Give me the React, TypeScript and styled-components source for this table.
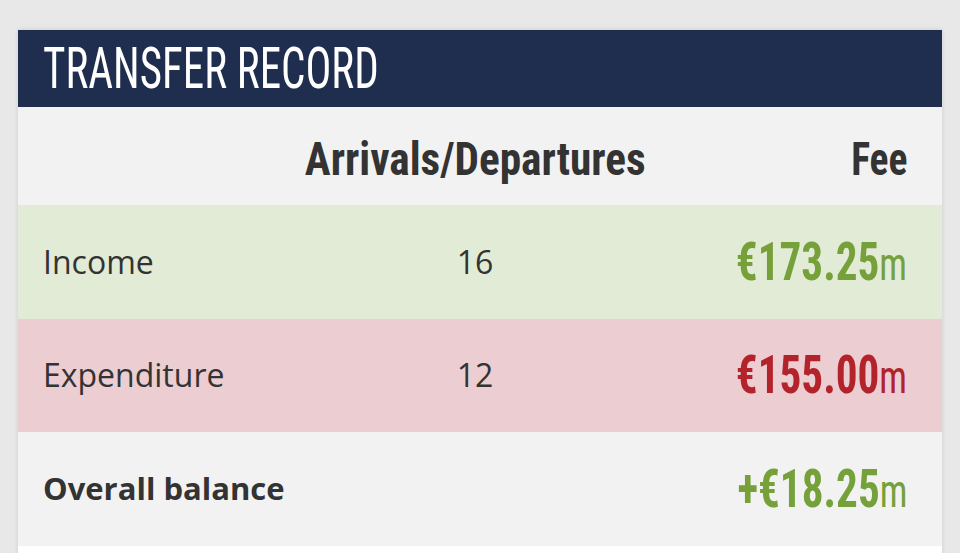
import React from 'react';
import styled, { createGlobalStyle } from 'styled-components';

const GlobalStyle = createGlobalStyle`
    body {
        margin: 0;
        background: #e8e8e8;
        font-family: 'Open Sans', 'Noto Sans', sans-serif;
        color: #333333;
    }
`;

type Tone = 'plain' | 'income' | 'expense';

interface RowData {
    label: string;
    count?: string;
    amount: string;
    tone: Tone;
    bold?: boolean;
}

const rows: RowData[] = [
    { label: 'Income', count: '16', amount: '€173.25', tone: 'income' },
    { label: 'Expenditure', count: '12', amount: '€155.00', tone: 'expense' },
    { label: 'Overall balance', amount: '+€18.25', tone: 'plain', bold: true },
];

const rowColors: Record<Tone, string> = {
    plain: '#f2f2f2',
    income: '#e2ebd5',
    expense: '#ebcdd2',
};

const amountColors: Record<Tone, string> = {
    plain: '#76a13a',
    income: '#76a13a',
    expense: '#b2232b',
};

const TransferRecord: React.FunctionComponent = () => {
    return (
        <Page>
            <Card>
                <Header>
                    <Cond $origin="left" $scale={0.755}>TRANSFER RECORD</Cond>
                </Header>
                <HeadRow>
                    <span />
                    <HeadCell $align="center">
                        <Cond $origin="center" $scale={0.94}>Arrivals/Departures</Cond>
                    </HeadCell>
                    <HeadCell $align="right">
                        <Cond $origin="right" $scale={0.86}>Fee</Cond>
                    </HeadCell>
                </HeadRow>
                {rows.map(row => (
                    <Row key={row.label} $bg={rowColors[row.tone]}>
                        <Label $bold={row.bold}>{row.label}</Label>
                        <Count>{row.count}</Count>
                        <Fee>
                            <Cond $origin="right" $scale={0.8}>
                                <Amount $color={amountColors[row.tone]}>
                                    {row.amount}
                                    <Unit>m</Unit>
                                </Amount>
                            </Cond>
                        </Fee>
                    </Row>
                ))}
                <Footer />
            </Card>
        </Page>
    );
};

export default function App() {
    return (
        <>
            <GlobalStyle />
            <TransferRecord />
        </>
    );
}

const Page = styled.div`
    padding: 30px 18px 0;
    height: 553px;
    box-sizing: border-box;
    overflow: hidden;
`;

const Card = styled.section`
    background: #ffffff;
    box-shadow: 0 0 5px rgba(0, 0, 0, 0.12);
`;

const Header = styled.h2`
    margin: 0;
    height: 77px;
    padding: 0 25px;
    display: flex;
    align-items: center;
    background: #1f2e4f;
    color: #ffffff;
    font-family: 'Roboto Condensed', 'Liberation Sans', sans-serif;
    font-weight: 400;
    font-size: 57px;
    line-height: 1;
`;

const Cond = styled.span<{ $origin: string; $scale: number }>`
    display: inline-block;
    white-space: nowrap;
    transform: scaleX(${props => props.$scale});
    transform-origin: ${props => props.$origin} center;
`;

const Grid = styled.div`
    display: grid;
    grid-template-columns: 1fr auto 1fr;
    align-items: center;
    padding: 0 35px 0 25px;
`;

const HeadRow = styled(Grid)`
    height: 98px;
    background: #f2f2f2;
    font-family: 'Roboto Condensed', 'Liberation Sans', sans-serif;
    font-weight: 700;
    font-size: 46px;
    line-height: 1;
    color: #333333;
`;

const HeadCell = styled.div<{ $align: string }>`
    text-align: ${props => props.$align};
    padding-top: 6px;
`;

const Row = styled(Grid)<{ $bg: string }>`
    height: 113.5px;
    background: ${props => props.$bg};
    font-size: 32px;
    line-height: 1;
`;

const Label = styled.div<{ $bold?: boolean }>`
    font-weight: ${props => (props.$bold ? 700 : 400)};
    font-size: ${props => (props.$bold ? '31px' : '32px')};
    white-space: nowrap;
`;

const Count = styled.div`
    text-align: center;
`;

const Fee = styled.div`
    text-align: right;
`;

const Amount = styled.span<{ $color: string }>`
    font-family: 'Roboto Condensed', 'Liberation Sans', sans-serif;
    font-weight: 700;
    font-size: 54px;
    line-height: 1;
    color: ${props => props.$color};
`;

const Unit = styled.span`
    font-weight: 400;
    font-size: 46px;
`;

const Footer = styled.div`
    height: 40px;
    background: #ffffff;
`;
